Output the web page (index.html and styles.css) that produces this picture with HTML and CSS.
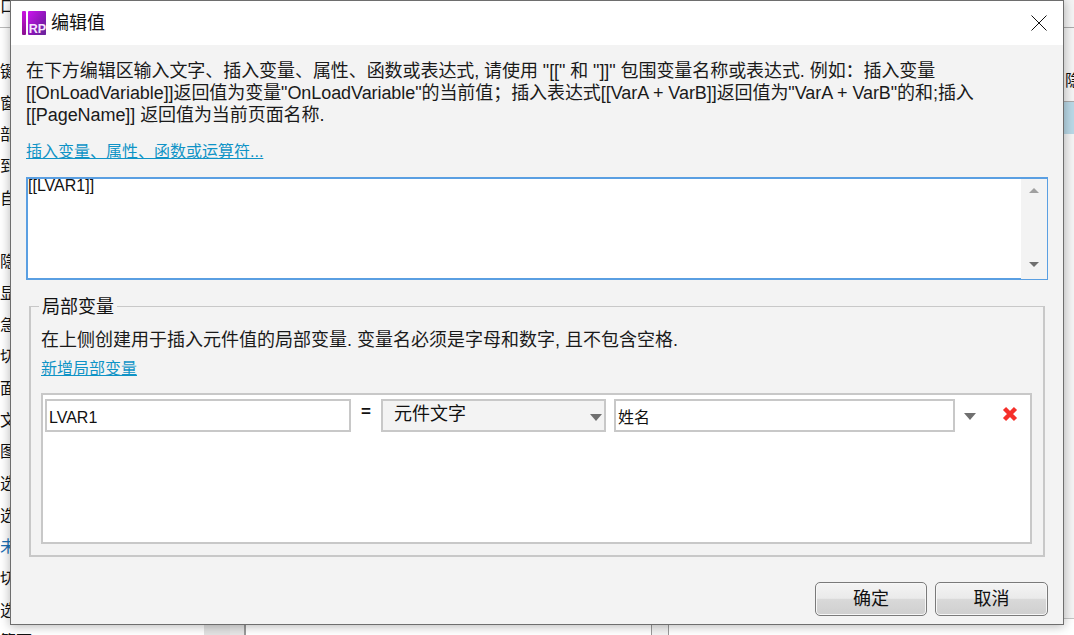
FILE: index.html
```html
<!DOCTYPE html>
<html lang="zh-CN">
<head>
<meta charset="utf-8">
<title>编辑值</title>
<link rel="stylesheet" href="styles.css">
</head>
<body>
<div class="backdrop">
  <div class="left-pane">
    <div class="top-row">口名</div>
    <ul class="side-list">
      <li>键</li><li>窗</li><li>部</li><li>到</li><li>自</li><li class="blank"></li>
      <li>隐</li><li>显</li><li>急</li><li>切</li><li>面</li><li>文</li><li>图</li>
      <li>选</li><li>选</li><li class="blue">未</li><li>切</li><li>选</li><li>算面</li>
    </ul>
  </div>
  <div class="gutter"></div>
  <div class="centre-pane"></div>
  <div class="right-pane">
    <div class="right-head"></div>
    <div class="right-row">隐</div>
    <div class="right-selected"></div>
    <div class="right-spacer"></div>
    <div class="right-foot"></div>
  </div>
</div>

<section class="dialog">
  <header class="titlebar">
    <svg class="app-icon" viewBox="0 0 24 24" width="24" height="24" aria-hidden="true">
      <defs>
        <linearGradient id="rp" x1="0" y1="0" x2="1" y2="1">
          <stop offset="0" stop-color="#cc14ee"/>
          <stop offset="1" stop-color="#5a1a8e"/>
        </linearGradient>
        <linearGradient id="rpbar" x1="0" y1="0" x2="0" y2="1">
          <stop offset="0" stop-color="#c814e0"/>
          <stop offset="1" stop-color="#8a1090"/>
        </linearGradient>
      </defs>
      <rect x="0" y="0" width="4" height="24" rx="1" fill="url(#rpbar)"/>
      <rect x="6" y="0" width="18" height="24" rx="1" fill="url(#rp)"/>
      <path d="M13 24 L24 8 V24 Z" fill="#7a2aa8" opacity=".55"/>
      <text x="15.5" y="21.5" text-anchor="middle" class="app-icon-text">RP</text>
    </svg>
    <h1 class="title">编辑值</h1>
    <button class="close" aria-label="关闭">
      <svg viewBox="0 0 16 16" width="16" height="16"><path d="M.5 .5 L15.5 15.5 M15.5 .5 L.5 15.5" stroke="#111" stroke-width="1" fill="none"/></svg>
    </button>
  </header>

  <div class="body">
    <p class="intro">在下方编辑区输入文字、插入变量、属性、函数或表达式, 请使用 "[[" 和 "]]" 包围变量名称或表达式. 例如：插入变量<br>[[OnLoadVariable]]返回值为变量"OnLoadVariable"的当前值；插入表达式[[VarA + VarB]]返回值为"VarA + VarB"的和;插入<br>[[PageName]] 返回值为当前页面名称.</p>
    <a class="link insert-link" href="#">插入变量、属性、函数或运算符...</a>

    <div class="editor">
      <div class="editor-text">[[LVAR1]]</div>
      <div class="scrollbar">
        <span class="tri up"></span>
        <span class="tri down"></span>
      </div>
    </div>

    <fieldset class="group">
      <legend class="group-title">局部变量</legend>
      <p class="hint">在上侧创建用于插入元件值的局部变量. 变量名必须是字母和数字, 且不包含空格.</p>
      <a class="link add-link" href="#">新增局部变量</a>
      <div class="var-box">
        <div class="var-row">
          <div class="field name-field">LVAR1</div>
          <span class="equals">=</span>
          <div class="field select-field">元件文字<span class="arrow select-arrow"></span></div>
          <div class="field value-field">姓名</div>
          <span class="arrow value-arrow"></span>
          <svg class="remove" viewBox="0 0 16 16" width="16" height="16" aria-hidden="true"><path d="M2.5 2.5 L13.5 13.5 M13.5 2.5 L2.5 13.5" stroke="#f5302a" stroke-width="4.4" fill="none"/></svg>
        </div>
      </div>
    </fieldset>

    <footer class="actions">
      <button class="btn btn-ok">确定</button>
      <button class="btn">取消</button>
    </footer>
  </div>
</section>
</body>
</html>
```
FILE: styles.css
```css
* { box-sizing: border-box; }
html, body { margin: 0; padding: 0; height: 100%; overflow: hidden; }
body {
  position: relative;
  width: 1074px;
  height: 635px;
  background: #f3f3f3;
  color: #111;
  font: 16px/22px "Liberation Sans", "Noto Sans CJK SC", sans-serif;
}

/* window behind the dialog */
.backdrop { display: flex; height: 635px; }
.left-pane { width: 204px; background: #fff; overflow: hidden; }
.top-row { height: 28px; border-bottom: 1px solid #bbb; line-height: 14px; font-size: 16px; }
.side-list { list-style: none; margin: 0; padding: 28px 0 0; width: 60px; }
.side-list li { height: 31.7px; line-height: 32px; font-size: 16px; white-space: nowrap; }
.side-list .blue { color: #1a6fb5; }
.gutter { width: 42px; background: #e6e6e6; border-left: 26px solid #e2e2e2; border-right: 1px solid #999; box-shadow: inset -1px 0 0 #999; }
.centre-pane { flex: 1; background: #fff; border-right: 1px solid #999; }
.right-pane { width: 406px; display: flex; flex-direction: column; background: #f4f4f4; border-left: 1px solid #999; margin-left: 16px; }
.right-head { height: 28px; border-bottom: 1px solid #aaa; }
.right-row { height: 74px; padding: 43px 0 0 396px; font-size: 16px; line-height: 20px; border-bottom: 1px solid #aaa; white-space: nowrap; overflow: hidden; }
.right-selected { height: 32px; background: #b9d8e6; }
.right-spacer { flex: 1; }
.right-foot { height: 17px; border-top: 1px solid #c4c4c4; background: #fff; }

/* dialog */
.dialog {
  position: absolute;
  left: 10px;
  top: 0;
  width: 1054px;
  height: 625px;
  display: flex;
  flex-direction: column;
  background: #f3f3f3;
  border: 1px solid #6e6e6e;
  box-shadow: 0 1px 10px rgba(0, 0, 0, .3);
}
.titlebar { display: flex; align-items: center; height: 44px; flex: none; background: #fff; padding-left: 11px; }
.app-icon { flex: none; }
.app-icon-text { font: bold 12.5px "Liberation Sans", sans-serif; fill: #f6e6ff; }
.title { margin: 0 0 0 5px; font-size: 18px; font-weight: 400; line-height: 24px; color: #111; }
.close { margin-left: auto; margin-right: 16px; padding: 0; border: 0; background: none; display: flex; }

.body { flex: 1; display: flex; flex-direction: column; padding: 15px 15px 8px; }
.intro { margin: 0; font-size: 18px; line-height: 22px; letter-spacing: -.07px; white-space: nowrap; color: #1a1a1a; }
.link { color: #0f93c6; text-decoration: underline; }
.insert-link { align-self: flex-start; margin-top: 16px; line-height: 20px; }

.editor {
  display: flex;
  height: 103px;
  margin-top: 15px;
  background: #fff;
  border: 1px solid #5a9fe2;
  border-width: 2px 1px 2px 2px;
}
.editor-text { flex: 1; line-height: 14px; color: #111; }
.scrollbar {
  flex: none;
  width: 26px;
  margin-bottom: -1px;
  padding: 9px 0 12px;
  background: #f3f3f3;
  display: flex;
  flex-direction: column;
  align-items: center;
  justify-content: space-between;
}
.tri { display: block; width: 0; height: 0; border-left: 5px solid transparent; border-right: 5px solid transparent; }
.tri.down { border-top: 5px solid #6f6f6f; }
.tri.up { border-bottom: 5px solid #a0a0a0; }
.arrow { display: block; width: 0; height: 0; border-left: 6.5px solid transparent; border-right: 6.5px solid transparent; border-top: 7px solid #707070; }

.group {
  margin: 15px 3px 0 3px;
  padding: 12px 11px 10px 10px;
  height: 262px;
  min-width: 0;
  border: 2px solid #c8c8c8;
  border-width: 1px 2px 2px 2px;
}
.group-title { padding: 2px 3px 0; margin-left: -2px; font-size: 18px; line-height: 20px; }
.hint { margin: 0; font-size: 18px; line-height: 22px; white-space: nowrap; color: #1a1a1a; }
.add-link { display: block; width: max-content; margin-top: 8px; line-height: 20px; }
.var-box { height: 151px; margin-top: 14px; background: #fff; border: 2px solid #c8c8c8; padding: 4px 2px; }
.var-row { display: flex; align-items: center; height: 33px; }
.field { height: 33px; background: #fff; border: 2px solid #c8c8c8; padding: 0 2px; line-height: 33px; white-space: nowrap; }
.name-field { width: 306px; }
.equals { width: 30px; text-align: center; font-weight: 700; font-size: 17px; line-height: 26px; margin-bottom: 7px; }
.select-field { width: 225px; background: #f3f3f3; padding: 0 2px 3px 11px; display: flex; justify-content: space-between; align-items: center; font-size: 18px; line-height: 24px; }
.select-arrow { margin-top: 6px; }
.value-field { width: 341px; margin-left: 8px; }
.value-arrow { margin-left: 9px; margin-top: 2px; }
.remove { margin-left: 26px; margin-bottom: 3px; flex: none; }

.actions { display: flex; justify-content: flex-end; gap: 8px; margin-top: auto; }
.btn {
  width: 113px;
  height: 34px;
  padding: 0;
  font: inherit;
  font-size: 18px;
  color: #111;
  border: 1px solid #7a7a7a;
  border-radius: 5px;
  background: linear-gradient(#f4f4f4 0, #eaeaea 48%, #d9d9d9 50%, #cfcfcf 100%);
  box-shadow: inset 0 0 0 1px #f7f7f7;
}
.btn-ok { width: 112px; }
```
